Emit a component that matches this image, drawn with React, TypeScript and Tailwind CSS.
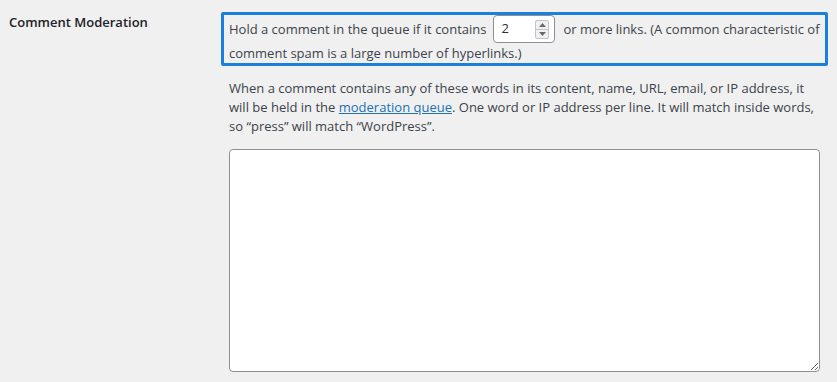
import React from 'react';

const Spinner: React.FC = () => (
  <div className="flex flex-col w-[14px] h-[19px] border border-[#c3c4c7] bg-[#f0f0f1] rounded-[2px]">
    <div className="flex-1 flex items-center justify-center border-b border-[#c3c4c7]">
      <svg width="7" height="4" viewBox="0 0 7 4"><path d="M0 4 L3.5 0 L7 4 Z" fill="#646970" /></svg>
    </div>
    <div className="flex-1 flex items-center justify-center">
      <svg width="7" height="4" viewBox="0 0 7 4"><path d="M0 0 L3.5 4 L7 0 Z" fill="#646970" /></svg>
    </div>
  </div>
);

const App: React.FC = () => {
  return (
    <div className="min-h-screen w-[837px] h-[382px] overflow-hidden bg-[#f0f0f1] font-['Open_Sans',sans-serif] text-[13px] text-[#3c434a]">
      <div className="flex">
        {/* Row label */}
        <div className="w-[221px] shrink-0 pl-[9px] pt-[12px] text-[13px] leading-[20px] font-semibold text-[#1d2327]">
          Comment Moderation
        </div>

        {/* Settings */}
        <div className="flex flex-col pt-[12px]">
          <div className="w-[607px] h-[54px] border-[3px] border-[#1a7fdd] rounded-[2px] pl-[5px]">
            <div className="flex items-center h-[28px] pt-[2px] whitespace-nowrap">
              <span>Hold a comment in the queue if it contains</span>
              <div className="ml-[7px] mr-[8px] -mt-[2px] flex items-center justify-between w-[62px] h-[28px] border border-[#8c8f94] rounded-[4px] bg-white pl-[7px] pr-[5px]">
                <span className="text-[#2c3338]">2</span>
                <Spinner />
              </div>
              <span>or more links. (A common characteristic of</span>
            </div>
            <div className="leading-[19px] mt-[1px] whitespace-nowrap">
              comment spam is a large number of hyperlinks.)
            </div>
          </div>

          <div className="mt-[13px] pl-[8px] leading-[19px] whitespace-nowrap">
            <div>When a comment contains any of these words in its content, name, URL, email, or IP address, it</div>
            <div>
              will be held in the{' '}
              <a href="#" className="text-[#2271b1] underline">moderation queue</a>. One word or IP address per line. It will match inside words,
            </div>
            <div>so “press” will match “WordPress”.</div>
          </div>

          <textarea
            className="mt-[13px] ml-[8px] w-[591px] h-[223px] box-border border border-[#8c8f94] rounded-[4px] bg-white"
            defaultValue=""
          />
        </div>
      </div>
    </div>
  );
};

export default App;
